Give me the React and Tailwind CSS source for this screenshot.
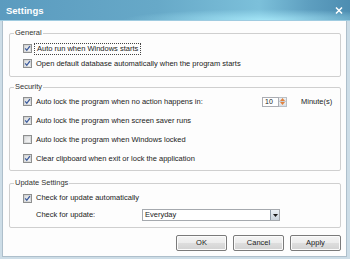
import React from 'react';

function Check({ checked }) {
  return (
    <svg width="9" height="9" viewBox="0 0 9 9" className="shrink-0">
      <defs>
        <linearGradient id="cbfill" x1="0" y1="0" x2="1" y2="1">
          <stop offset="0" stopColor="#d9dadb" />
          <stop offset="1" stopColor="#f9f9f9" />
        </linearGradient>
      </defs>
      <rect x="0.5" y="0.5" width="8" height="8" fill="#fff" stroke="#8e8f8f" />
      <rect x="1.5" y="1.5" width="6" height="6" fill="url(#cbfill)" stroke="#c4c6c9" strokeWidth="0.6" />
      {checked && <path d="M2.2 4.4 L3.8 6.3 L6.9 2.1" fill="none" stroke="#3a5a9c" strokeWidth="1.3" />}
    </svg>
  );
}

function Row({ checked, children, h = 'h-[15px]' }) {
  return (
    <div className={`flex items-center gap-[4px] pl-[13px] ${h}`}>
      <Check checked={checked} />
      {children}
    </div>
  );
}

function Group({ title, children, className = '' }) {
  return (
    <fieldset className={`border border-[#cfcfcf] rounded-[2px] ${className}`}>
      <legend className="ml-[4px] px-[1px] leading-[10px] text-[#333]">{title}</legend>
      {children}
    </fieldset>
  );
}

function Button({ children }) {
  return (
    <button className="w-[51px] h-[16px] border border-[#7a7a7a] rounded-[2px] bg-[linear-gradient(#f4f4f4,#ececec_50%,#dedede_50%,#d2d2d2)] shadow-[inset_0_0_0_1px_#fbfbfb] text-[#222] leading-none">
      {children}
    </button>
  );
}

export default function App() {
  return (
    <div className="w-[350px] h-[259px] flex flex-col bg-[#cddde7] font-['Liberation_Sans',Arial,sans-serif] text-[7.5px] text-[#222]">
      {/* title bar */}
      <div className="h-[21px] shrink-0 flex items-center justify-between pl-[6px] pr-[7px] pt-[1px] bg-[radial-gradient(ellipse_at_76%_100%,rgba(175,240,255,0.75),transparent_38%),linear-gradient(to_right,#5b9bbf,#67a9c8_45%,#7cc0da_74%,#5e9fc0_88%,#4d8db1)] border-b border-[#9fcbe0]">
        <span className="text-white font-bold text-[9.5px] leading-none">Settings</span>
        <svg width="8" height="7" viewBox="0 0 8 7">
          <path d="M1 0.5 L7 6.5 M7 0.5 L1 6.5" stroke="#fff" strokeWidth="1.5" />
        </svg>
      </div>

      {/* body */}
      <div className="flex-1 ml-[2px] mr-[3px] mb-[2px] bg-[#fdfdfd] border-x border-b border-[#aebfcb] pt-[7px] pl-[6px] pr-[5px] flex flex-col">
        <Group title="General">
          <div className="pt-[3px] pb-[5px]">
            <Row checked>
              <span className="outline outline-1 outline-dotted outline-[#444] outline-offset-[1px] px-[1px] leading-[8px]">Auto run when Windows starts</span>
            </Row>
            <Row checked>
              <span>Open default database automatically when the program starts</span>
            </Row>
          </div>
        </Group>

        <Group title="Security" className="mt-[5px]">
          <div className="pb-[2px]">
            <Row checked h="h-[19px]">
              <span className="flex-1">Auto lock the program when no action happens in:</span>
              <div className="flex items-center">
                <div className="w-[17px] h-[10px] border border-[#abadb3] bg-white flex items-center pl-[2px] text-[7px] leading-none">10</div>
                <div className="w-[8px] h-[10px] flex flex-col border border-l-0 border-[#b9c0c7]">
                  <div className="flex-1 bg-[linear-gradient(#f1f3f5,#dde2e7)] flex items-center justify-center border-b border-[#c5ccd3]">
                    <svg width="5" height="3" viewBox="0 0 5 3"><path d="M0 3 L2.5 0 L5 3 Z" fill="#e0813e" /></svg>
                  </div>
                  <div className="flex-1 bg-[linear-gradient(#eef1f4,#d8dee4)] flex items-center justify-center">
                    <svg width="5" height="3" viewBox="0 0 5 3"><path d="M0 0 L2.5 3 L5 0 Z" fill="#e0813e" /></svg>
                  </div>
                </div>
              </div>
              <span className="ml-[10px] w-[32px] pr-[7px] box-content">Minute(s)</span>
            </Row>
            <Row checked h="h-[19px]">
              <span>Auto lock the program when screen saver runs</span>
            </Row>
            <Row h="h-[19px]">
              <span>Auto lock the program when Windows locked</span>
            </Row>
            <Row checked h="h-[19px]">
              <span>Clear clipboard when exit or lock the application</span>
            </Row>
          </div>
        </Group>

        <Group title="Update Settings" className="mt-[7px]">
          <div className="pt-[1px] pb-[4px]">
            <Row checked h="h-[18px]">
              <span>Check for update automatically</span>
            </Row>
            <div className="h-[16px] flex items-center pl-[26px]">
              <span className="w-[106px]">Check for update:</span>
              <div className="w-[138px] h-[12px] border border-[#a5a9ae] bg-white flex items-center">
                <span className="flex-1 pl-[2px]">Everyday</span>
                <div className="w-[9px] h-full border-l border-[#8e9ba7] bg-[linear-gradient(#eaf0f5,#c9d3dc)] flex items-center justify-center">
                  <svg width="5" height="3" viewBox="0 0 5 3"><path d="M0 0 L2.5 3 L5 0 Z" fill="#1b1b1b" /></svg>
                </div>
              </div>
            </div>
          </div>
        </Group>

        <div className="mt-[7px] flex justify-end gap-[6px]">
          <Button>OK</Button>
          <Button>Cancel</Button>
          <Button>Apply</Button>
        </div>
      </div>
    </div>
  );
}
